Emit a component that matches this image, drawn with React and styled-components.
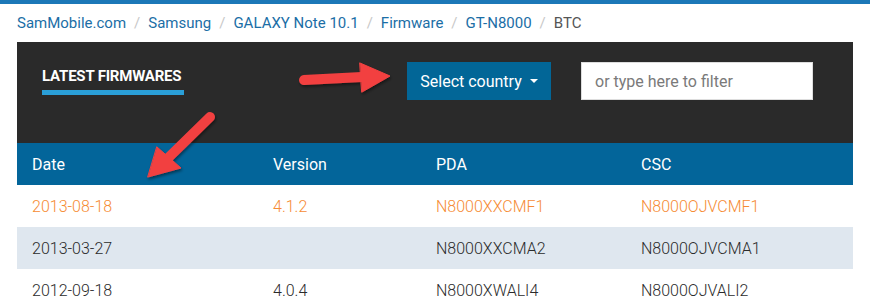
import React from "react";
import styled, { createGlobalStyle } from "styled-components";

const Global = createGlobalStyle`
  body {
    margin: 0;
    background: #fff;
    font-family: Roboto, "Noto Sans", sans-serif;
  }
`;

const Page = styled.div`
  position: relative;
  width: 870px;
  height: 307px;
  overflow: hidden;
`;

const TopStrip = styled.div`
  height: 4px;
  background: #1c78b8;
`;

const Crumbs = styled.div`
  height: 38px;
  display: flex;
  align-items: center;
  padding-left: 17px;
  font-size: 15px;
  color: #1b6ea6;
`;

const Sep = styled.span`
  color: #c8c8c8;
  margin: 0 8px;
`;

const Current = styled.span`
  color: #555;
`;

const Panel = styled.div`
  margin: 0 17px;
`;

const Toolbar = styled.div`
  height: 101px;
  background: #2a2a2a;
  display: flex;
  align-items: flex-start;
  padding: 20px 0 0 25px;
  box-sizing: border-box;
`;

const Title = styled.div`
  margin-top: 5px;
  color: #fff;
  font-weight: 700;
  font-size: 15px;
  letter-spacing: -0.2px;
  padding-bottom: 5px;
  border-bottom: 5px solid #2a9fd8;
  width: 142px;
  white-space: nowrap;
`;

const CountryButton = styled.div`
  margin-left: 223px;
  width: 144px;
  height: 38px;
  background: #026697;
  color: #fff;
  font-size: 16px;
  display: flex;
  align-items: center;
  justify-content: center;
  gap: 8px;
`;

const Caret = styled.span`
  width: 0;
  height: 0;
  border-left: 4px solid transparent;
  border-right: 4px solid transparent;
  border-top: 4px solid #fff;
`;

const Filter = styled.div`
  margin-left: 30px;
  width: 232px;
  height: 38px;
  box-sizing: border-box;
  background: #fff;
  border: 1px solid #ddd;
  color: #7a7a7a;
  font-size: 16px;
  display: flex;
  align-items: center;
  padding-left: 13px;
`;

const Row = styled.div`
  display: grid;
  grid-template-columns: 241px 163px 205px 1fr;
  height: 42px;
  align-items: center;
  padding-left: 15px;
  font-size: 16px;
  font-weight: ${(p) => (p.$head ? 400 : 300)};
  background: ${(p) => p.$bg};
  color: ${(p) => p.$color};
`;

const Arrows = styled.svg`
  position: absolute;
  left: 0;
  top: 0;
  pointer-events: none;
`;

const crumbs = ["SamMobile.com", "Samsung", "GALAXY Note 10.1", "Firmware", "GT-N8000"];

const rows = [
  { date: "2013-08-18", ver: "4.1.2", pda: "N8000XXCMF1", csc: "N8000OJVCMF1", bg: "#fff", color: "#f68b33" },
  { date: "2013-03-27", ver: "", pda: "N8000XXCMA2", csc: "N8000OJVCMA1", bg: "#dfe7ef", color: "#2b2b2b" },
  { date: "2012-09-18", ver: "4.0.4", pda: "N8000XWALI4", csc: "N8000OJVALI2", bg: "#fff", color: "#2b2b2b" },
];

export default function App() {
  return (
    <Page>
      <Global />
      <TopStrip />
      <Crumbs>
        {crumbs.map((c) => (
          <React.Fragment key={c}>
            <span>{c}</span>
            <Sep>/</Sep>
          </React.Fragment>
        ))}
        <Current>BTC</Current>
      </Crumbs>
      <Panel>
        <Toolbar>
          <Title>LATEST FIRMWARES</Title>
          <CountryButton>
            Select country <Caret />
          </CountryButton>
          <Filter>or type here to filter</Filter>
        </Toolbar>
        <Row $head $bg="#03659a" $color="#fff">
          <span>Date</span>
          <span>Version</span>
          <span>PDA</span>
          <span>CSC</span>
        </Row>
        {rows.map((r) => (
          <Row key={r.date} $bg={r.bg} $color={r.color}>
            <span>{r.date}</span>
            <span>{r.ver}</span>
            <span>{r.pda}</span>
            <span>{r.csc}</span>
          </Row>
        ))}
      </Panel>
      <Arrows width="870" height="307">
        <defs>
          <filter id="sh" x="-20%" y="-20%" width="140%" height="140%">
            <feDropShadow dx="1" dy="2" stdDeviation="1.5" floodColor="#000" floodOpacity="0.45" />
          </filter>
        </defs>
        <g filter="url(#sh)" fill="#f24141" stroke="#f24141" strokeLinecap="round">
          <line x1="304" y1="80" x2="362" y2="77" strokeWidth="10" />
          <polygon points="360,63 390,76 362,92" strokeWidth="1" strokeLinejoin="round" />
          <line x1="210" y1="117" x2="166" y2="160" strokeWidth="10" />
          <polygon points="157,147 181,168 148,177" strokeWidth="1" strokeLinejoin="round" />
        </g>
      </Arrows>
    </Page>
  );
}
